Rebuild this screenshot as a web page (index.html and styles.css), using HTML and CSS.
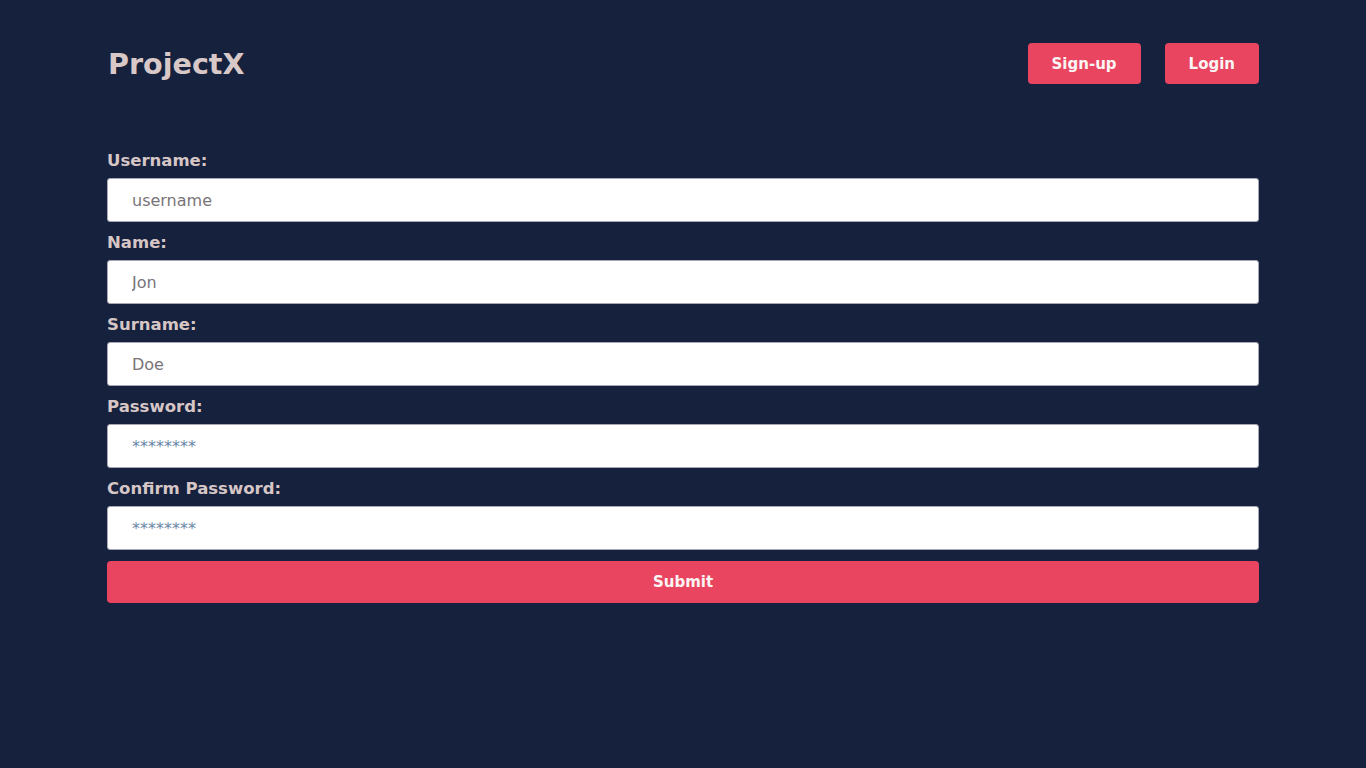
FILE: index.html
```html
<!DOCTYPE html>
<html lang="en">
<head>
<meta charset="utf-8">
<title>ProjectX - Sign up</title>
<link rel="stylesheet" href="styles.css">
</head>
<body>
<div class="page">
  <header class="topbar">
    <div class="logo">ProjectX</div>
    <nav class="nav">
      <button class="btn">Sign-up</button>
      <button class="btn">Login</button>
    </nav>
  </header>
  <form class="form">
    <div class="field">
      <label class="label" for="username">Username:</label>
      <input class="input" id="username" type="text" placeholder="username">
    </div>
    <div class="field">
      <label class="label" for="name">Name:</label>
      <input class="input" id="name" type="text" placeholder="Jon">
    </div>
    <div class="field">
      <label class="label" for="surname">Surname:</label>
      <input class="input" id="surname" type="text" placeholder="Doe">
    </div>
    <div class="field">
      <label class="label" for="password">Password:</label>
      <input class="input pw" id="password" type="password" placeholder="********">
    </div>
    <div class="field">
      <label class="label" for="confirm">Confirm Password:</label>
      <input class="input pw" id="confirm" type="password" placeholder="********">
    </div>
    <button class="submit" type="button">Submit</button>
  </form>
</div>
</body>
</html>
```

FILE: styles.css
```css
html, body {
  margin: 0;
  padding: 0;
  background: #16213e;
  font-family: "DejaVu Sans", "Liberation Sans", sans-serif;
}
.page {
  width: 1152px;
  margin: 0 auto;
  padding-top: 43px;
}
.topbar {
  display: flex;
  justify-content: space-between;
  align-items: center;
  height: 41px;
}
.logo {
  font-size: 28.6px;
  font-weight: bold;
  color: #d9c8c8;
  padding-left: 1px;
  padding-top: 1px;
}
.nav {
  display: flex;
  gap: 24px;
}
.btn {
  font-family: inherit;
  font-size: 15px;
  font-weight: bold;
  height: 41px;
  color: #fbf4f4;
  background: #e94560;
  border: none;
  border-radius: 4px;
  padding: 0 24px;
  cursor: pointer;
}
.form {
  margin-top: 67px;
  display: flex;
  flex-direction: column;
}
.field {
  display: flex;
  flex-direction: column;
  margin-bottom: 11px;
}
.label {
  font-size: 16.5px;
  font-weight: bold;
  line-height: 20px;
  color: #d6c6c6;
  margin-bottom: 7px;
}
.input {
  box-sizing: border-box;
  height: 44px;
  width: 100%;
  padding: 0 24px;
  font-family: inherit;
  font-size: 16px;
  border: 1px solid #a9a9b4;
  border-radius: 3px;
  background: #ffffff;
  color: #333;
  outline: none;
}
.input::placeholder {
  color: #787478;
}
.pw::placeholder {
  color: #6a86a8;
}
.submit {
  height: 42px;
  width: 100%;
  font-family: inherit;
  font-size: 15px;
  font-weight: bold;
  color: #fbf4f4;
  background: #e94560;
  border: none;
  border-radius: 4px;
  cursor: pointer;
}
```
